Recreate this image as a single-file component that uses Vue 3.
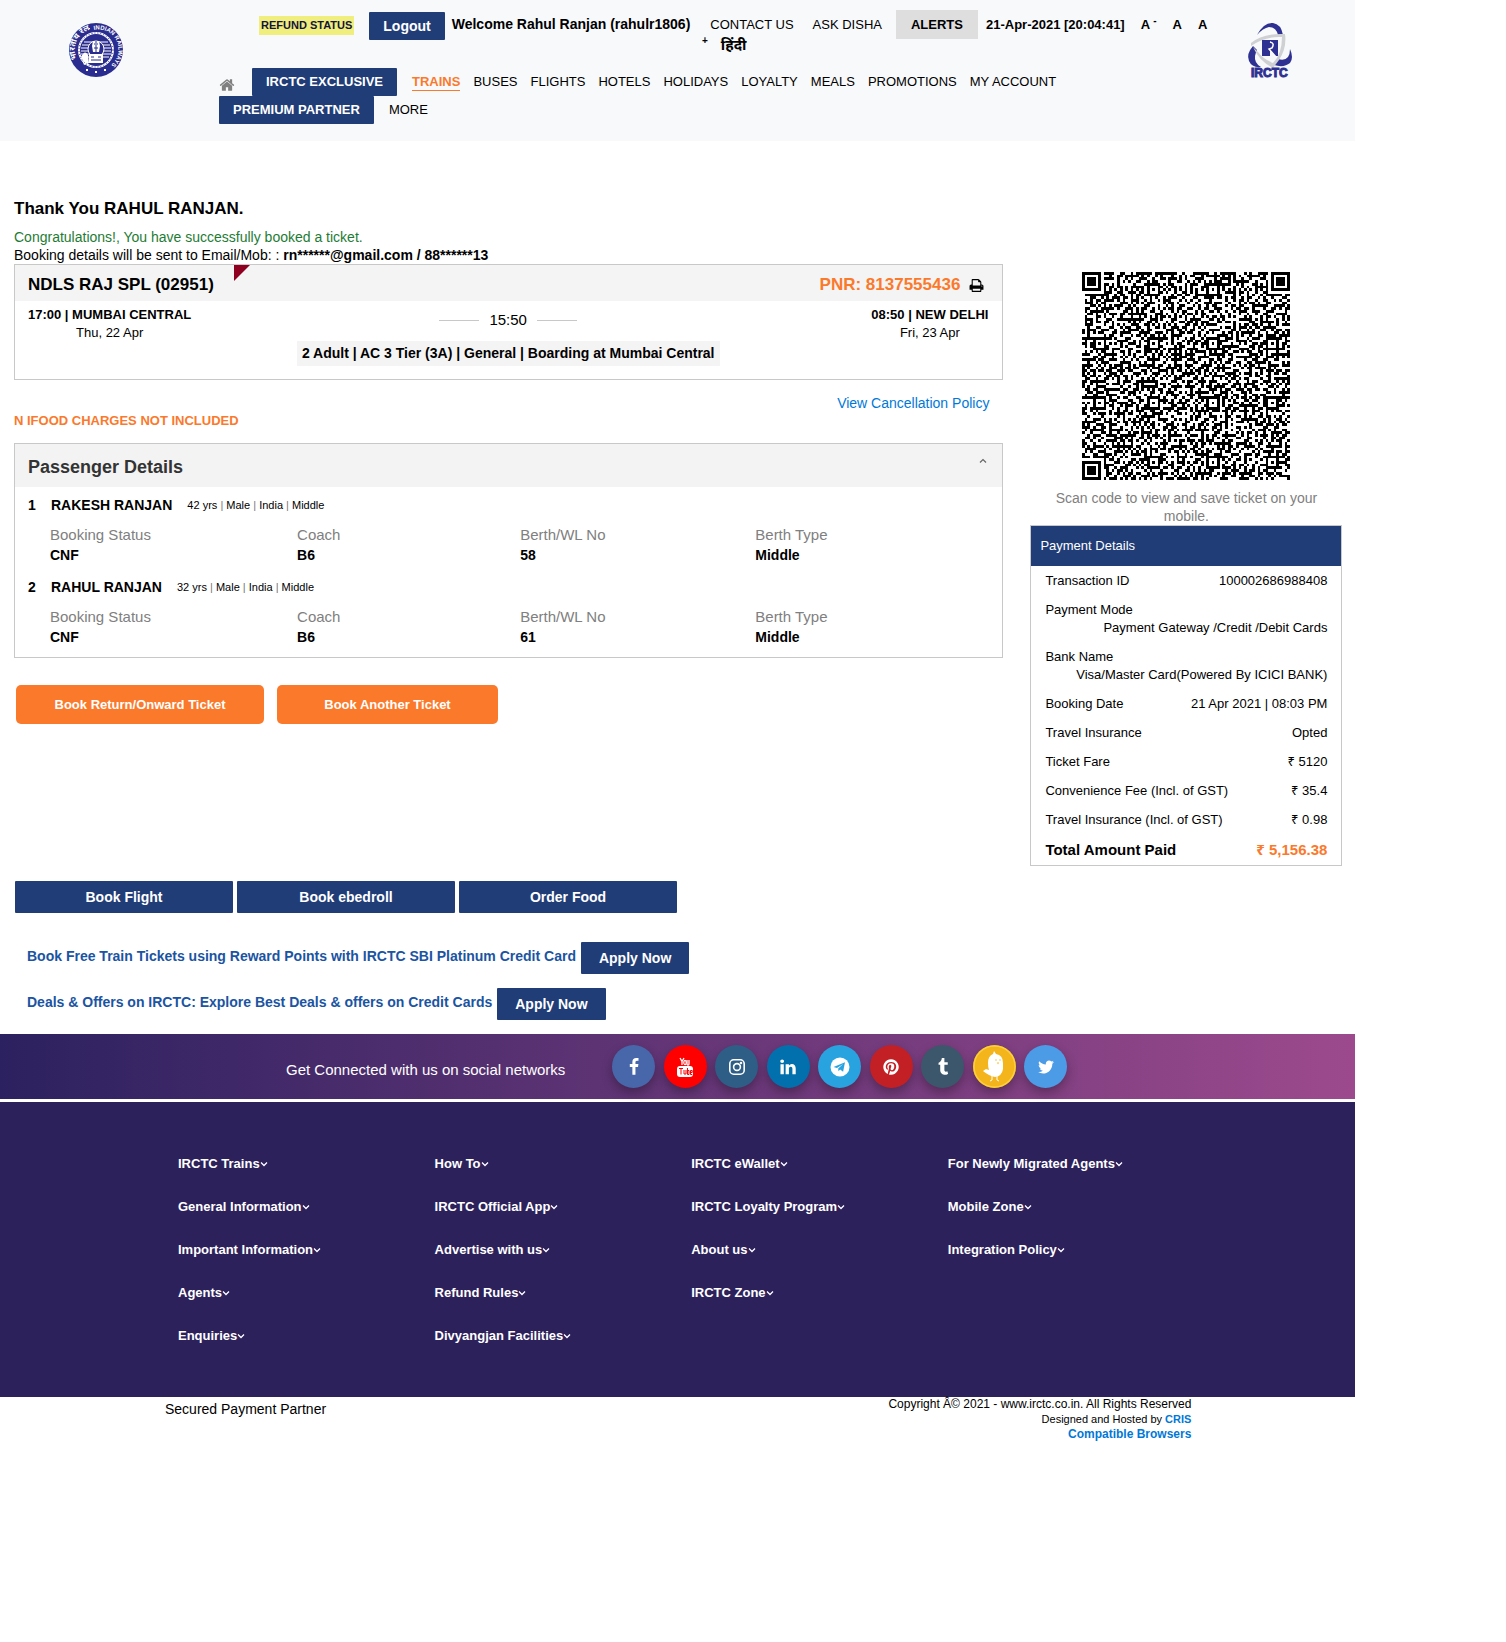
<script setup>
const navItems = ['TRAINS', 'BUSES', 'FLIGHTS', 'HOTELS', 'HOLIDAYS', 'LOYALTY', 'MEALS', 'PROMOTIONS', 'MY ACCOUNT']

const passengers = [
  { no: 1, name: 'RAKESH RANJAN', info: ['42 yrs', 'Male', 'India', 'Middle'], status: 'CNF', coach: 'B6', berth: '58', type: 'Middle' },
  { no: 2, name: 'RAHUL RANJAN', info: ['32 yrs', 'Male', 'India', 'Middle'], status: 'CNF', coach: 'B6', berth: '61', type: 'Middle' },
]

const payments = [
  ['Transaction ID', '100002686988408'],
  ['Payment Mode', 'Payment Gateway /Credit /Debit Cards'],
  ['Bank Name', 'Visa/Master Card(Powered By ICICI BANK)'],
  ['Booking Date', '21 Apr 2021 | 08:03 PM'],
  ['Travel Insurance', 'Opted'],
  ['Ticket Fare', '₹ 5120'],
  ['Convenience Fee (Incl. of GST)', '₹ 35.4'],
  ['Travel Insurance (Incl. of GST)', '₹ 0.98'],
]

const footerColumns = [
  ['IRCTC Trains', 'General Information', 'Important Information', 'Agents', 'Enquiries'],
  ['How To', 'IRCTC Official App', 'Advertise with us', 'Refund Rules', 'Divyangjan Facilities'],
  ['IRCTC eWallet', 'IRCTC Loyalty Program', 'About us', 'IRCTC Zone'],
  ['For Newly Migrated Agents', 'Mobile Zone', 'Integration Policy'],
]

const socials = [
  { id: 'facebook', d: 'M1343 12v264h-157q-86 0-116 36t-30 108v189h293l-39 296h-254v759h-306v-759h-255v-296h255v-218q0-186 104-288.500t277-102.500q147 0 228 12z' },
  { id: 'youtube' },
  { id: 'instagram' },
  { id: 'linkedin', d: 'M477 625v991h-330v-991h330zm21-306q1 73-50.500 122t-135.500 49h-2q-82 0-132-49t-50-122q0-74 51.500-122.500t134.500-48.500 133 48.500 51 122.500zm1166 729v568h-329v-530q0-105-40.500-164.500t-126.500-59.500q-63 0-105.500 34.500t-63.500 85.500q-11 30-11 81v553h-329q2-399 2-647t-1-296l-1-48h329v144h-2q20-32 41-56t56.500-52 87-43.500 114.500-15.500q171 0 275 113.500t104 332.500z' },
  { id: 'telegram' },
  { id: 'pinterest', d: 'M1664 896q0 209-103 385.500t-279.500 279.500-385.500 103q-111 0-218-32 59-93 78-164 9-34 54-211 20 39 73 67.500t114 28.500q121 0 216-68.500t147-188.500 52-270q0-114-59.500-214t-172.500-163-255-63q-105 0-196 29t-154.500 77-109 110.500-67 129.500-21.500 134q0 104 40 183t117 111q30 12 38-20 2-7 8-31t8-30q6-23-11-43-51-61-51-151 0-151 104.500-259.500t273.500-108.500q151 0 235.500 82t84.500 213q0 170-68.500 289t-175.500 119q-61 0-98-43.500t-23-104.500q8-35 26.500-93.500t30-103 11.500-75.500q0-50-27-83t-77-33q-62 0-105 57t-43 142q0 73 25 122l-99 418q-17 70-13 177-206-91-333-281t-127-423q0-209 103-385.500t279.500-279.500 385.500-103 385.500 103 279.500 279.500 103 385.500z' },
  { id: 'tumblr', d: 'M1328 1329l80 237q-23 35-111 66t-177 32q-104 2-190.500-26t-142.500-74-95-106-55.500-120-16.500-118v-544h-168v-215q72-26 129-69.500t91-90 58-102 34-99 15-88.500q1-5 4.500-8.500t7.500-3.500h244v424h333v252h-334v518q0 30 6.500 56t22.500 52.500 49.500 41.500 81.500 14q78-2 134-29z' },
  { id: 'koo' },
  { id: 'twitter', d: 'M1684 408q-67 98-162 167 1 14 1 42 0 130-38 259.500t-115.500 248.500-184.500 210.500-258 146-323 54.500q-271 0-496-145 35 4 78 4 225 0 401-138-105-2-188-64.500t-114-159.500q33 5 61 5 43 0 85-11-112-23-185.500-111.500t-73.500-205.500v-4q68 38 146 41-66-44-105-115t-39-154q0-88 44-163 121 149 294.500 238.500t371.500 99.500q-8-38-8-74 0-134 94.500-228.500t228.500-94.500q140 0 236 102 109-21 205-78-37 115-142 178 93-10 186-50z' },
]

// Module grid of a version 15 QR symbol: finders, alignment squares, timing lines and data.
const QR_SIZE = 77
function buildQr() {
  const grid = []
  let seed = 8137555
  for (let y = 0; y < QR_SIZE; y++) {
    const row = []
    for (let x = 0; x < QR_SIZE; x++) {
      seed = (Math.imul(seed, 1664525) + 1013904223) >>> 0
      let dark = ((seed >>> 16) & 1) === 1
      // Break up solid 2x2 blocks so that the data area stays evenly grained.
      if (x > 0 && y > 0) {
        const left = row[x - 1]
        if (left === grid[y - 1][x] && left === grid[y - 1][x - 1]) dark = !left
      }
      row.push(dark)
    }
    grid.push(row)
  }
  for (let i = 0; i < QR_SIZE; i++) {
    grid[6][i] = i % 2 === 0
    grid[i][6] = i % 2 === 0
  }
  const stamp = (cx, cy, radius, dark) => {
    for (let dy = -radius; dy <= radius; dy++) {
      for (let dx = -radius; dx <= radius; dx++) {
        const x = cx + dx
        const y = cy + dy
        if (x < 0 || y < 0 || x >= QR_SIZE || y >= QR_SIZE) continue
        grid[y][x] = dark(Math.max(Math.abs(dx), Math.abs(dy)))
      }
    }
  }
  const centres = [6, 26, 48, 70]
  for (const cx of centres) for (const cy of centres) stamp(cx, cy, 2, (r) => r !== 1)
  const last = QR_SIZE - 4
  for (const [cx, cy] of [[3, 3], [last, 3], [3, last]]) stamp(cx, cy, 4, (r) => r === 3 || r < 2)
  let d = ''
  grid.forEach((row, y) => {
    let x = 0
    while (x < QR_SIZE) {
      if (!row[x]) { x++; continue }
      let end = x
      while (end < QR_SIZE && row[end]) end++
      d += `M${x} ${y}h${end - x}v1h${x - end}z`
      x = end
    }
  })
  return d
}
const qrPath = buildQr()
</script>

<template>
  <div class="page">
    <header class="header">
      <a href="#" class="brand" aria-label="Indian Railways">
        <svg width="54" height="54" viewBox="0 0 54 54">
          <circle cx="27" cy="27" r="27" fill="#2a2d8f" />
          <circle cx="27" cy="27" r="18" fill="#fff" />
          <circle cx="27" cy="27" r="16" fill="#2a2d8f" />
          <path d="M15 19h24M13 22h28M12 25h30M12 28h30M12 31h30M14 34h26" stroke="#fff" stroke-width="1" />
          <circle cx="27" cy="26" r="8" fill="#2a2d8f" stroke="#fff" />
          <path d="M24 18h6l1 5-1 6h-6l-1-6zM20 31h14v9H20z" fill="#fff" />
          <path d="M25 21h1M28 21h1M25 25h4M27 18v12M22 34h3M29 34h3M22 37h10" stroke="#2a2d8f" />
          <path d="M12 34q4-8 7-2l1 8-5 2z" fill="#fff" />
          <circle cx="27" cy="27" r="17" fill="none" stroke="#2a2d8f" stroke-dasharray="1 2" />
          <path d="M27 50l-1-1 1-1 1 1zM18 48l-1-1 1-1 1 1zM36 48l-1-1 1-1 1 1zM20 6l1-1M20 5l1 1" fill="#fff" stroke="#fff" />
          <defs>
            <path id="ring-right" d="M25 7A20 20 0 0 1 34 46" />
            <path id="ring-left" d="M8 36A21 21 0 0 1 20 7" />
          </defs>
          <text class="ring-text"><textPath href="#ring-right">INDIAN RAILWAYS</textPath></text>
          <text class="ring-text hindi-ring"><textPath href="#ring-left">भारतीय रेल</textPath></text>
        </svg>
      </a>

      <div class="header-body">
        <div class="topbar">
          <a href="#" class="refund">REFUND STATUS</a>
          <button class="btn logout">Logout</button>
          <span class="welcome">Welcome Rahul Ranjan (rahulr1806)</span>
          <a href="#" class="contact">CONTACT US</a>
          <a href="#" class="disha">ASK DISHA</a>
          <button class="alerts">ALERTS</button>
          <span class="clock">21-Apr-2021 [20:04:41]</span>
          <a href="#" class="size">A <sup>-</sup></a>
          <a href="#" class="size">A</a>
          <a href="#" class="size">A</a>
        </div>
        <div class="topbar-wrap"><a href="#"><sup>+</sup></a><a href="#" class="hindi">हिंदी</a></div>

        <nav class="nav">
          <a href="#" class="home" aria-label="Home">
            <svg width="16" height="16" viewBox="0 0 1792 1792" fill="#808080"><path d="M1472 992v480q0 26-19 45t-45 19h-384v-384h-256v384h-384q-26 0-45-19t-19-45v-480q0-1 .5-3t.5-3l575-474 575 474q1 2 1 6zm223-69l-62 74q-8 9-21 11h-3q-13 0-21-7l-692-577-692 577q-12 8-24 7-13-2-21-11l-62-74q-8-10-7-23.500t11-21.500l719-599q32-26 76-26t76 26l244 204v-195q0-14 9-23t23-9h192q14 0 23 9t9 23v408l219 182q10 8 11 21.500t-7 23.500z" /></svg>
          </a>
          <button class="btn nav-btn">IRCTC EXCLUSIVE</button>
          <a v-for="(item, i) in navItems" :key="item" href="#" class="nav-link" :class="{ active: i === 0 }">{{ item }}</a>
        </nav>
        <div class="nav">
          <button class="btn nav-btn">PREMIUM PARTNER</button>
          <a href="#" class="nav-link">MORE</a>
        </div>
      </div>

      <a href="#" class="brand" aria-label="IRCTC">
        <svg class="irctc" width="46" height="56" viewBox="0 0 46 56">
          <path d="M10 12Q17-1 26 0q8 1 10 12h-5q-2-8-9-8-6 1-12 8z" fill="#2f3192" />
          <path d="M6 23Q-1 31 2 38q3 7 12 6-7-4-6-11 1-4 2-6z" fill="#2f3192" />
          <path d="M43 26q4 9 0 14-6 5-16 2l4-6q7 2 10-2 2-3 2-8z" fill="#2f3192" />
          <path d="M4 20Q16 10 38 11q2 14-6 26l-6 8Q12 38 6 24l5 5q5 7 15 11 9-9 9-26Q18 13 4 23z" fill="#cfd0d3" />
          <path d="M15 17h16v16h-3l-5-6v6h-8z" fill="#2f3192" />
          <path d="M23 19q5 1 2 6l-3 1 7 8" fill="none" stroke="#fff" stroke-width="1.500" />
          <text x="4" y="54" class="logo-text">IRCTC</text>
        </svg>
      </a>
    </header>

    <main class="main">
      <h1 class="thanks">Thank You RAHUL RANJAN.</h1>
      <p class="success">Congratulations!, You have successfully booked a ticket.</p>
      <p class="sent">Booking details will be sent to Email/Mob: : <b>rn******@gmail.com / 88******13</b></p>

      <div class="columns">
        <div class="left">
          <section class="card">
            <div class="journey-head">
              <h2>NDLS RAJ SPL (02951)</h2>
              <span class="corner"></span>
              <span class="pnr">PNR: 8137555436</span>
              <button class="print" aria-label="Print ticket">
                <svg width="15" height="15" viewBox="0 0 1792 1792"><path d="M448 1536h896v-256h-896v256zm0-640h896v-384h-160q-40 0-68-28t-28-68v-160h-640v640zm1152 64q0-26-19-45t-45-19-45 19-19 45 19 45 45 19 45-19 19-45zm128 0v416q0 13-9.500 22.500t-22.500 9.500h-224v160q0 40-28 68t-68 28h-960q-40 0-68-28t-28-68v-160h-224q-13 0-22.500-9.500t-9.500-22.500v-416q0-79 56.500-135.500t135.500-56.500h64v-544q0-40 28-68t68-28h672q40 0 88 20t76 48l152 152q28 28 48 76t20 88v256h64q79 0 135.500 56.500t56.500 135.500z" /></svg>
              </button>
            </div>
            <div class="journey-body">
              <div class="station"><b>17:00 | MUMBAI CENTRAL</b><span>Thu, 22 Apr</span></div>
              <div class="middle">
                <div class="duration">15:50</div>
                <div class="summary">2 Adult | AC 3 Tier (3A) | General | Boarding at Mumbai Central</div>
              </div>
              <div class="station arrival"><b>08:50 | NEW DELHI</b><span>Fri, 23 Apr</span></div>
            </div>
          </section>

          <a href="#" class="policy">View Cancellation Policy</a>
          <p class="food">N IFOOD CHARGES NOT INCLUDED</p>

          <section class="card">
            <div class="pax-head">
              <h2>Passenger Details</h2>
              <button class="toggle" aria-label="Collapse passenger details">
                <svg width="8" height="5" viewBox="0 0 8 5" fill="none" stroke="#666" stroke-width="1.200"><path d="M1 4.500l3-3 3 3" /></svg>
              </button>
            </div>
            <div v-for="p in passengers" :key="p.no" class="pax">
              <div class="pax-name">
                <b class="pax-no">{{ p.no }}</b><b>{{ p.name }}</b>
                <span class="pax-info"><template v-for="(part, i) in p.info" :key="i"><i v-if="i"> | </i>{{ part }}</template></span>
              </div>
              <dl class="pax-grid">
                <div><dt>Booking Status</dt><dd>{{ p.status }}</dd></div>
                <div><dt>Coach</dt><dd>{{ p.coach }}</dd></div>
                <div><dt>Berth/WL No</dt><dd>{{ p.berth }}</dd></div>
                <div><dt>Berth Type</dt><dd>{{ p.type }}</dd></div>
              </dl>
            </div>
          </section>

          <div class="actions">
            <button class="orange wide">Book Return/Onward Ticket</button>
            <button class="orange">Book Another Ticket</button>
          </div>
        </div>

        <aside class="right-col">
          <svg class="qr" width="208" height="208" viewBox="0 0 77 77" shape-rendering="crispEdges" role="img" aria-label="Ticket QR code"><path :d="qrPath" /></svg>
          <p class="scan">Scan code to view and save ticket on your mobile.</p>
          <section class="card payment">
            <h2>Payment Details</h2>
            <dl>
              <div v-for="[label, value] in payments" :key="label" class="pay-row"><dt>{{ label }}</dt><dd>{{ value }}</dd></div>
              <div class="pay-row total"><dt>Total Amount Paid</dt><dd>₹ 5,156.38</dd></div>
            </dl>
          </section>
        </aside>
      </div>

      <div class="services">
        <button class="btn">Book Flight</button>
        <button class="btn">Book ebedroll</button>
        <button class="btn">Order Food</button>
      </div>
      <div class="promo"><a href="#">Book Free Train Tickets using Reward Points with IRCTC SBI Platinum Credit Card</a><button class="btn">Apply Now</button></div>
      <div class="promo"><a href="#">Deals &amp; Offers on IRCTC: Explore Best Deals &amp; offers on Credit Cards</a><button class="btn">Apply Now</button></div>
    </main>

    <section class="social">
      <span class="social-text">Get Connected with us on social networks</span>
      <div class="social-icons">
        <a v-for="s in socials" :key="s.id" href="#" class="bubble" :class="s.id" :aria-label="s.id">
          <svg v-if="s.d" width="18" height="18" viewBox="0 0 1792 1792" fill="#fff"><path :d="s.d" /></svg>
          <svg v-else-if="s.id === 'youtube'" width="18" height="20" viewBox="0 0 18 20">
            <rect x="1" y="9" width="16" height="11" rx="3" fill="#fff" />
            <path d="M4 1l2 3.500v3.500M8 1L6 4.500M13 3v4q0 1-1 1t-1-1v-4" fill="none" stroke="#fff" stroke-width="1.300" />
            <ellipse cx="9" cy="5.500" rx="1.200" ry="2.200" fill="none" stroke="#fff" stroke-width="1.200" />
            <path d="M3 11.500h4M5 11.500v6M8 13v4h2v-4M11.500 11v6.500h1.500v-4h-1.500M15 15.500h1.200v-2h-1.700v4h1.700" fill="none" stroke="#f00" />
          </svg>
          <svg v-else-if="s.id === 'instagram'" width="18" height="18" viewBox="0 0 18 18" fill="none" stroke="#fff" stroke-width="1.600">
            <rect x="1.800" y="1.800" width="14.400" height="14.400" rx="4" /><circle cx="9" cy="9" r="3.400" /><circle cx="13" cy="5" r=".5" />
          </svg>
          <svg v-else-if="s.id === 'telegram'" width="20" height="20" viewBox="0 0 20 20">
            <circle cx="10" cy="10" r="9.500" fill="#fff" /><path d="M3.500 10L15 5.300l-1.900 9.500-3-2.200-1.600 1.600-.3-2.700 5-4.500-6.200 3.900z" fill="#29a3e0" />
          </svg>
          <svg v-else width="43" height="43" viewBox="0 0 43 43">
            <circle cx="21.500" cy="21.500" r="20.500" fill="none" stroke="#fbd03a" stroke-width="1.500" />
            <path d="M20 9l1-3 2 3q7 1 7 9v6q-1 7-8 8-6-1-12-6l3-2 3 1q-1-2-1-7 0-7 5-9z" fill="#fff" />
            <path d="M19 31v4l-2 1M24 31v4l2 1" stroke="#fff" fill="none" />
            <circle cx="23" cy="15" r=".7" fill="#f3b51b" /><circle cx="27" cy="15" r=".7" fill="#f3b51b" /><path d="M24 17.500h2l-1 2z" fill="#f3b51b" />
          </svg>
        </a>
      </div>
    </section>

    <footer class="footer">
      <ul v-for="(column, i) in footerColumns" :key="i">
        <li v-for="item in column" :key="item">
          <a href="#">{{ item }}<svg width="8" height="5" viewBox="0 0 8 5" fill="none" stroke="#fff" stroke-width="1.300"><path d="M1 .5l3 3 3-3" /></svg></a>
        </li>
      </ul>
    </footer>

    <div class="legal">
      <span class="secured">Secured Payment Partner</span>
      <div class="copyright">
        <div>Copyright Â© 2021 - www.irctc.co.in. All Rights Reserved</div>
        <div class="host">Designed and Hosted by <a href="#">CRIS</a></div>
        <div><a href="#">Compatible Browsers</a></div>
      </div>
    </div>
  </div>
</template>

<style>
body {
  margin: 0;
  background: #fff;
}
</style>

<style scoped>
.page {
  width: 90%;
  font-family: "Liberation Sans", Arial, "Noto Sans", sans-serif;
  font-size: 14px;
  line-height: 18px;
  color: #000;
}
* {
  box-sizing: border-box;
}
h1, h2, p, dl, dd, ul {
  margin: 0;
  padding: 0;
}
a {
  color: inherit;
  text-decoration: none;
}
button {
  margin: 0;
  padding: 0;
  border: 0;
  background: none;
  font: inherit;
  cursor: pointer;
}
svg {
  display: block;
}
.btn {
  background: #213d77;
  color: #fff;
  font-weight: bold;
  border-radius: 1px;
}

/* Header */
.header {
  display: flex;
  background: #f8f9fb;
  padding: 10px 62px 17px 69px;
}
.brand {
  padding-top: 13px;
}
.ring-text {
  fill: #fff;
  font-size: 6px;
  font-weight: bold;
}
.hindi-ring {
  font-size: 8px;
}
.irctc {
  overflow: visible;
}
.logo-text {
  fill: #2f3192;
  stroke: #2f3192;
  font-size: 12px;
  font-weight: bold;
}
.header-body {
  flex: 1;
  margin-left: 96px;
  font-size: 13px;
}
.topbar {
  display: flex;
  align-items: flex-start;
  justify-content: center;
  height: 26px;
  line-height: 29px;
  white-space: nowrap;
}
.refund {
  margin-top: 6px;
  padding: 0 2px;
  background: #f0ee7c;
  color: #14143c;
  font-size: 11px;
  font-weight: bold;
  line-height: 19px;
}
.logout {
  margin: 2px 7px 0 15px;
  padding: 0 14px;
  font-size: 14px;
  line-height: 28px;
}
.welcome {
  font-size: 14px;
  font-weight: bold;
}
.contact {
  margin-left: 20px;
}
.disha {
  margin: 0 14px 0 19px;
}
.alerts {
  margin-right: 8px;
  padding: 0 15px;
  background: #dedede;
  font-weight: bold;
  line-height: 29px;
}
.clock {
  font-weight: bold;
}
.size {
  margin-left: 16px;
  font-weight: bold;
}
sup {
  font-size: 10px;
  line-height: 0;
}
.topbar-wrap {
  display: flex;
  justify-content: center;
  gap: 13px;
  height: 32px;
  padding-right: 18px;
  font-weight: bold;
}
.hindi {
  font-size: 15px;
}
.nav {
  display: flex;
  align-items: center;
  height: 28px;
  white-space: nowrap;
}
.home {
  margin: 6px 17px 0 0;
}
.nav-btn {
  padding: 0 14px;
  line-height: 28px;
  margin-right: 2px;
}
.nav-link {
  margin-left: 13px;
}
.nav-link.active {
  color: #fb792b;
  font-weight: bold;
  border-bottom: 1px solid #fb792b;
  line-height: 17px;
}

/* Booking confirmation */
.main {
  padding: 58px 13px 14px 14px;
}
.thanks {
  font-size: 17px;
  line-height: 20px;
  margin-bottom: 9px;
}
.success {
  color: #1e7b34;
}
.columns {
  display: grid;
  grid-template-columns: 1fr 312px;
  gap: 27px;
}
.card {
  border: 1px solid #c8c8c8;
}
.journey-head {
  display: flex;
  align-items: center;
  height: 36px;
  padding: 4px 18px 0 13px;
  background: #f4f4f4;
}
.journey-head h2,
.pnr {
  font-size: 17px;
  font-weight: bold;
}
.corner {
  align-self: flex-start;
  margin: -4px auto 0 20px;
  border-top: 16px solid #8f0020;
  border-right: 16px solid transparent;
}
.pnr {
  color: #fb792b;
}
.print {
  margin-left: 9px;
}
.journey-body {
  display: grid;
  grid-template-columns: 1fr auto 1fr;
  padding: 5px 14px 13px 13px;
}
.station {
  display: flex;
  flex-direction: column;
  align-items: center;
  justify-self: start;
  font-size: 13px;
}
.station.arrival {
  justify-self: end;
}
.middle {
  display: flex;
  flex-direction: column;
  align-items: center;
  gap: 12px;
  padding-top: 5px;
}
.duration {
  display: flex;
  align-items: center;
  gap: 10px;
  font-size: 15px;
}
.duration::before,
.duration::after {
  content: "";
  width: 40px;
  border-top: 1px solid #c8c8c8;
}
.summary {
  padding: 0 5px;
  background: #f4f4f4;
  font-weight: bold;
  line-height: 25px;
}
.policy {
  display: block;
  margin: 14px 14px 0 0;
  color: #0078d7;
  text-align: right;
}
.food {
  margin-bottom: 13px;
  color: #fb792b;
  font-size: 13px;
  font-weight: bold;
}
.pax-head {
  display: flex;
  justify-content: space-between;
  height: 43px;
  padding: 14px 15px 0 13px;
  background: #f3f3f3;
}
.pax-head h2 {
  color: #333;
  font-size: 18px;
}
.toggle {
  align-self: flex-start;
}
.pax {
  padding: 9px 13px 0;
}
.pax:last-child {
  padding-bottom: 6px;
}
.pax-name {
  display: flex;
  align-items: center;
}
.pax-no {
  width: 23px;
}
.pax-info {
  margin-left: 15px;
  font-size: 11px;
  white-space: pre;
}
.pax-info i {
  color: #777;
  font-style: normal;
}
.pax-grid {
  display: grid;
  grid-template-columns: 247fr 223fr 235fr 234fr;
  margin: 11px 0 4px 22px;
  line-height: 20px;
}
.pax-grid dt {
  color: #808080;
  font-size: 15px;
}
.pax-grid dd {
  font-weight: bold;
}
.actions {
  display: flex;
  gap: 13px;
  margin: 27px 2px 0;
}
.orange {
  width: 221px;
  border-radius: 5px;
  background: #fb792b;
  color: #fff;
  font-size: 13px;
  font-weight: bold;
  line-height: 39px;
}
.orange.wide {
  width: 248px;
}

/* QR and payment */
.qr {
  margin: 8px auto 9px;
}
.scan {
  padding: 0 20px;
  color: #808080;
  text-align: center;
}
.payment h2 {
  padding-left: 9px;
  background: #213d77;
  color: #fff;
  font-size: 13px;
  font-weight: normal;
  line-height: 40px;
}
.payment dl {
  display: flex;
  flex-direction: column;
  gap: 11px;
  padding: 6px 14px;
  font-size: 13px;
}
.pay-row {
  display: flex;
  flex-wrap: wrap;
  justify-content: space-between;
}
.pay-row dd {
  margin-left: auto;
}
.pay-row.total {
  padding-top: 1px;
  font-size: 15px;
  font-weight: bold;
}
.total dd {
  color: #fb792b;
}

/* Services and offers */
.services {
  display: flex;
  gap: 4px;
  margin: 15px 1px 29px;
}
.services .btn {
  width: 218px;
  line-height: 32px;
}
.promo {
  display: flex;
  gap: 5px;
  margin: 0 0 14px 13px;
  line-height: 28px;
  color: #1a54a2;
  font-weight: bold;
}
.promo:last-child {
  margin-bottom: 0;
}
.promo .btn {
  padding: 0 18px;
  line-height: 32px;
}

/* Social bar */
.social {
  display: flex;
  align-items: center;
  height: 65px;
  padding-left: 286px;
  background: linear-gradient(90deg, #2c2160, #9c4a8d);
  color: #fff;
}
.social-text {
  width: 326px;
  padding-top: 6px;
  font-size: 15px;
}
.social-icons {
  display: flex;
  justify-content: space-between;
  width: 455px;
}
.bubble {
  display: flex;
  align-items: center;
  justify-content: center;
  width: 43px;
  height: 43px;
  border-radius: 50%;
  box-shadow: 0 5px 11px rgba(0, 0, 0, 0.3);
}
.facebook { background: #4867aa; }
.youtube { background: #f00; }
.instagram { background: #2e5e86; }
.linkedin { background: #0270ad; }
.telegram { background: #29a3e0; }
.pinterest { background: #c32026; }
.tumblr { background: #3c576c; }
.koo { background: #f3b51b; }
.twitter { background: #4c9be6; }

/* Footer */
.footer {
  display: grid;
  grid-template-columns: repeat(4, 1fr);
  margin-top: 3px;
  padding: 53px 151px 27px 178px;
  background: #2d215c;
  color: #fff;
  font-size: 13px;
  font-weight: bold;
}
.footer ul {
  list-style: none;
}
.footer li {
  height: 43px;
}
.footer a {
  display: inline-flex;
  align-items: center;
  white-space: nowrap;
}
.legal {
  display: flex;
  justify-content: space-between;
  padding: 0 164px 0 165px;
}
.secured {
  padding-top: 3px;
}
.copyright {
  font-size: 12px;
  line-height: 15px;
  text-align: right;
}
.host {
  font-size: 11px;
}
.copyright a {
  color: #0078d7;
  font-weight: bold;
}
</style>
